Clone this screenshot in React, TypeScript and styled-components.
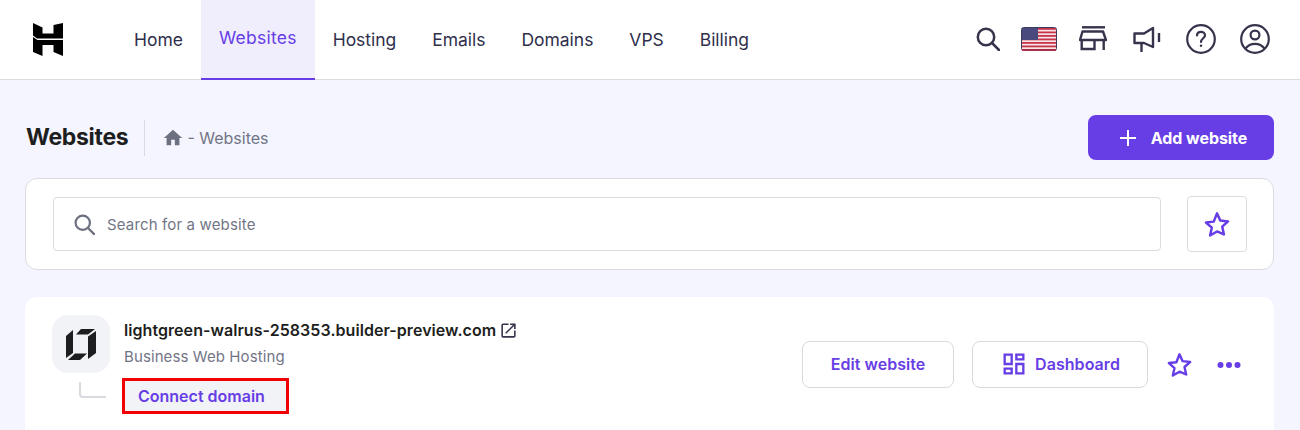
import React from "react";
import styled, { createGlobalStyle } from "styled-components";

const GlobalStyle = createGlobalStyle`
  html, body {
    margin: 0;
    padding: 0;
    height: 430px;
    overflow: hidden;
    background: #f4f5ff;
    font-family: Inter, "Liberation Sans", sans-serif;
  }
  * { box-sizing: border-box; }
`;

const NAV_ITEMS = ["Home", "Websites", "Hosting", "Emails", "Domains", "VPS", "Billing"];

function Logo() {
  return (
    <svg width="30" height="33" viewBox="0 0 30 33" fill="#000">
      <path d="M0 0 L9.5 4.5 V10.5 H20.5 V2 L30 0 V15.5 H4 L0 12.5 Z" />
      <path d="M0 14 L4.5 17 H30 V33 L20.5 29 V22 H9.5 V33 L0 29 Z" />
    </svg>
  );
}

function TileLogo() {
  return (
    <svg width="30" height="31" viewBox="0 0 30 31" fill="#1d1e20">
      <path d="M15 0 H29 L22 5.5 H10 Z" />
      <path d="M0 7 L7 1 V24 L0 29 Z" />
      <path d="M22 7.5 L30 2 V24 L22 30 Z" />
      <path d="M9 24.5 H21 L14 31 H2 Z" />
    </svg>
  );
}

function Flag() {
  const stripes = [0, 1, 2, 3, 4, 5, 6];
  return (
    <svg width="36" height="24" viewBox="0 0 36 24">
      <rect x="0.5" y="0.5" width="35" height="23" rx="2" fill="#f7e4e6" stroke="#3a3a5e" />
      {stripes.map((i) => (
        <rect key={i} x="1" y={1 + i * 3.5} width="34" height="1.8" fill="#c8354a" />
      ))}
      <rect x="1" y="1" width="16" height="12" fill="#49497d" />
      <rect x="1" y="22" width="34" height="1.4" fill="#a82c44" />
    </svg>
  );
}

function SearchIcon({ size, color }: { size: number; color: string }) {
  return (
    <svg width={size} height={size} viewBox="0 0 24 24" fill="none" stroke={color} strokeWidth="2.5">
      <circle cx="10" cy="10" r="8.2" />
      <path d="M16 16 L23 23" strokeLinecap="round" />
    </svg>
  );
}

function StarIcon({ size }: { size: number }) {
  return (
    <svg width={size} height={size} viewBox="0 0 24 24" fill="none" stroke="#673de6" strokeWidth="2.3" strokeLinejoin="round">
      <path d="M12 2.2l3 6.6 7.2.8-5.4 4.8 1.6 7.2L12 18.9l-6.4 3.7 1.6-7.2-5.4-4.8 7.2-.8z" />
    </svg>
  );
}

function StoreIcon() {
  return (
    <svg width="28" height="25" viewBox="0 0 28 25" fill="none" stroke="#36344d" strokeWidth="2.4">
      <path d="M3 1.3 H26" />
      <path d="M3.5 5.5 H24 L27 14 H1 Z" strokeLinejoin="round" />
      <path d="M2.7 14 V23 H15.5 V14 M24.7 14 V24" />
    </svg>
  );
}

function MegaphoneIcon() {
  return (
    <svg width="29" height="26" viewBox="0 0 29 26" fill="none" stroke="#36344d" strokeWidth="2.4" strokeLinejoin="round">
      <path d="M1.5 7.5 H11 L20 2 V21 L11 17 H1.5 Z" />
      <path d="M8.5 17 V26" />
      <path d="M26 7 V16" strokeWidth="2.4" />
    </svg>
  );
}

function HelpIcon() {
  return (
    <svg width="30" height="30" viewBox="0 0 30 30" fill="none" stroke="#36344d" strokeWidth="2.2">
      <circle cx="15" cy="15" r="13.8" />
      <path d="M11 11.5 C11 9 13 7.8 15 7.8 C17.3 7.8 19 9.3 19 11.3 C19 14.2 15 14.4 15 18" strokeLinecap="round" />
      <circle cx="15" cy="21.8" r="1.2" fill="#36344d" stroke="none" />
    </svg>
  );
}

function AccountIcon() {
  return (
    <svg width="30" height="30" viewBox="0 0 30 30" fill="none" stroke="#36344d" strokeWidth="2.2">
      <circle cx="15" cy="15" r="13.8" />
      <circle cx="15" cy="11" r="4.4" />
      <path d="M5.5 24.5 C8 21 11 19.8 15 19.8 C19 19.8 22 21 24.5 24.5" />
    </svg>
  );
}

function App() {
  return (
    <>
      <GlobalStyle />
      <TopBar>
        <LogoSlot>
          <Logo />
        </LogoSlot>
        <NavList>
          {NAV_ITEMS.map((item) => (
            <NavItem key={item} $active={item === "Websites"}>
              {item}
            </NavItem>
          ))}
        </NavList>
        <TopIcons>
          <IconSlot $gap={0}>
            <SearchIcon size={24} color="#36344d" />
          </IconSlot>
          <IconSlot $gap={21}>
            <Flag />
          </IconSlot>
          <IconSlot $gap={22}>
            <StoreIcon />
          </IconSlot>
          <IconSlot $gap={26}>
            <MegaphoneIcon />
          </IconSlot>
          <IconSlot $gap={24}>
            <HelpIcon />
          </IconSlot>
          <IconSlot $gap={24}>
            <AccountIcon />
          </IconSlot>
        </TopIcons>
      </TopBar>
      <Main>
        <PageHeader>
          <PageTitle>Websites</PageTitle>
          <Breadcrumb>
            <svg width="22" height="22" viewBox="0 0 24 24" fill="#6d7081">
              <path d="M10 20v-6h4v6h5v-8h3L12 3 2 12h3v8z" />
            </svg>
            <span>- Websites</span>
          </Breadcrumb>
          <AddButton>
            <svg width="18" height="18" viewBox="0 0 18 18" stroke="#fff" strokeWidth="2">
              <path d="M9 1 V17 M1 9 H17" />
            </svg>
            Add website
          </AddButton>
        </PageHeader>
        <SearchCard>
          <SearchField>
            <SearchIcon size={21} color="#6d7081" />
            <span>Search for a website</span>
          </SearchField>
          <FavouriteButton>
            <StarIcon size={26} />
          </FavouriteButton>
        </SearchCard>
        <WebsiteCard>
          <TileColumn>
            <Tile>
              <TileLogo />
            </Tile>
            <Connector />
          </TileColumn>
          <SiteInfo>
            <SiteName>
              lightgreen-walrus-258353.builder-preview.com
              <svg width="19" height="19" viewBox="0 0 24 24" fill="#36344d">
                <path d="M19 19H5V5h7V3H5a2 2 0 0 0-2 2v14a2 2 0 0 0 2 2h14c1.1 0 2-.9 2-2v-7h-2v7zM14 3v2h3.59l-9.83 9.83 1.41 1.41L19 6.41V10h2V3h-7z" />
              </svg>
            </SiteName>
            <SitePlan>Business Web Hosting</SitePlan>
            <ConnectHighlight>
              <ConnectLabel>Connect domain</ConnectLabel>
            </ConnectHighlight>
          </SiteInfo>
          <SiteActions>
            <OutlineButton $width={152}>Edit website</OutlineButton>
            <OutlineButton $width={176}>
              <svg width="28" height="28" viewBox="0 0 24 24" fill="#673de6">
                <path d="M19 5v2h-4V5h4M9 5v6H5V5h4m10 8v6h-4v-6h4M9 17v2H5v-2h4M21 3h-8v6h8V3zM11 3H3v10h8V3zm10 8h-8v10h8V11zm-10 4H3v6h8v-6z" />
              </svg>
              Dashboard
            </OutlineButton>
            <StarSlot>
              <StarIcon size={25} />
            </StarSlot>
            <svg width="24" height="8" viewBox="0 0 24 8" fill="#673de6">
              <circle cx="3.5" cy="4" r="3" />
              <circle cx="12" cy="4" r="3" />
              <circle cx="20.5" cy="4" r="3" />
            </svg>
          </SiteActions>
        </WebsiteCard>
      </Main>
    </>
  );
}

const TopBar = styled.header`
  display: flex;
  align-items: stretch;
  height: 80px;
  background: #fff;
  border-bottom: 1px solid #dadce0;
`;

const LogoSlot = styled.div`
  display: flex;
  align-items: center;
  width: 116px;
  padding: 0 0 0 33px;
`;

const NavList = styled.nav`
  display: flex;
`;

const NavItem = styled.div<{ $active?: boolean }>`
  display: flex;
  align-items: center;
  padding: ${(p) => (p.$active ? "0 18px 3px" : "0 18px")};
  font-size: 17.5px;
  letter-spacing: ${(p) => (p.$active ? "0.25px" : "-0.03px")};
  color: ${(p) => (p.$active ? "#673de6" : "#2f2f4c")};
  background: ${(p) => (p.$active ? "#f0eefc" : "transparent")};
  border-bottom: ${(p) => (p.$active ? "2px solid #673de6" : "none")};
  height: ${(p) => (p.$active ? "80px" : "79px")};
`;

const TopIcons = styled.div`
  display: flex;
  align-items: center;
  margin-left: auto;
  padding-right: 30px;
  padding-bottom: 2px;
`;

const IconSlot = styled.div<{ $gap: number }>`
  display: flex;
  margin-left: ${(p) => p.$gap}px;
`;

const Main = styled.main`
  padding: 35px 26px 0 25px;
`;

const PageHeader = styled.div`
  display: flex;
  align-items: center;
  height: 45px;
`;

const PageTitle = styled.h1`
  margin: 0;
  padding: 0 16px 2px 1px;
  font-size: 23px;
  line-height: 34px;
  font-weight: 700;
  color: #1d1e20;
  border-right: 1px solid #d8dae0;
  letter-spacing: -0.3px;
`;

const Breadcrumb = styled.div`
  display: flex;
  align-items: center;
  gap: 3px;
  margin-left: 17px;
  font-size: 16px;
  color: #727586;
`;

const AddButton = styled.button`
  display: flex;
  align-items: center;
  justify-content: center;
  gap: 14px;
  width: 186px;
  height: 45px;
  margin-left: auto;
  padding: 0 0 0 4px;
  border: none;
  border-radius: 8px;
  background: #673de6;
  color: #fff;
  font-family: inherit;
  font-size: 16px;
  font-weight: 700;
  letter-spacing: -0.05px;
`;

const SearchCard = styled.section`
  display: flex;
  align-items: center;
  gap: 26px;
  height: 92px;
  margin-top: 18px;
  padding: 0 26px 0 27px;
  background: #fff;
  border: 1px solid #dadce0;
  border-radius: 12px;
`;

const SearchField = styled.div`
  display: flex;
  flex: 1;
  align-items: center;
  gap: 12px;
  height: 54px;
  padding-left: 20px;
  border: 1px solid #dadce0;
  border-radius: 4px;
  font-size: 15px;
  color: #727586;
  letter-spacing: 0.15px;
`;

const FavouriteButton = styled.div`
  display: flex;
  align-items: center;
  justify-content: center;
  width: 60px;
  height: 56px;
  border: 1px solid #dadce0;
  border-radius: 4px;
`;

const WebsiteCard = styled.section`
  display: flex;
  align-items: flex-start;
  height: 133px;
  margin-top: 27px;
  padding: 18px 33px 0 27px;
  background: #fff;
  border-radius: 12px 12px 0 0;
`;

const TileColumn = styled.div`
  display: flex;
  flex-direction: column;
  width: 58px;
`;

const Tile = styled.div`
  display: flex;
  align-items: center;
  justify-content: center;
  width: 58px;
  height: 58px;
  background: #f2f3f6;
  border-radius: 16px;
`;

const Connector = styled.div`
  width: 27px;
  height: 16px;
  margin: 9px 0 0 27px;
  border-left: 2px solid #d8dae0;
  border-bottom: 2px solid #d8dae0;
  border-bottom-left-radius: 4px;
`;

const SiteInfo = styled.div`
  display: flex;
  flex-direction: column;
  margin-left: 14px;
`;

const SiteName = styled.div`
  display: flex;
  align-items: center;
  gap: 3px;
  height: 24px;
  margin-top: 3px;
  font-size: 16px;
  font-weight: 600;
  color: #1d1e20;
  letter-spacing: 0.06px;
`;

const SitePlan = styled.div`
  margin-top: 4px;
  font-size: 15px;
  line-height: 22px;
  color: #727586;
  letter-spacing: 0.1px;
`;

const ConnectHighlight = styled.div`
  width: 167px;
  height: 36px;
  margin: 10px 0 0 -2px;
  border: 3px solid #f00000;
`;

const ConnectLabel = styled.div`
  display: flex;
  align-items: center;
  height: 100%;
  padding: 0 0 1px 13px;
  background: #f2f3f6;
  font-size: 16px;
  font-weight: 600;
  color: #673de6;
`;

const SiteActions = styled.div`
  display: flex;
  align-items: center;
  margin-left: auto;
  margin-top: 26px;
`;

const OutlineButton = styled.button<{ $width: number }>`
  display: flex;
  align-items: center;
  justify-content: center;
  gap: 7px;
  width: ${(p) => p.$width}px;
  height: 47px;
  margin-right: 18px;
  padding: 0 0 1px;
  background: #fff;
  border: 1px solid #d8dae0;
  border-radius: 8px;
  color: #673de6;
  font-family: inherit;
  font-size: 16px;
  font-weight: 600;
  letter-spacing: 0.05px;
`;

const StarSlot = styled.div`
  display: flex;
  margin: 0 25px 0 1px;
`;

export default App;
